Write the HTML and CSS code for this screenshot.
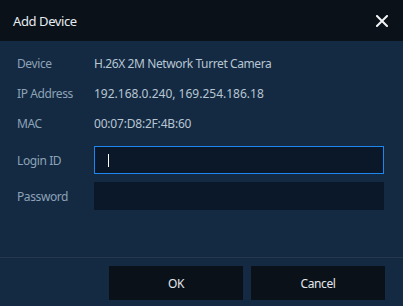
FILE: index.html
```html
<!DOCTYPE html>
<html lang="en">
<head>
    <meta charset="UTF-8">
    <title>Add Device</title>
    <link rel="stylesheet" href="styles.css">
</head>
<body>
<div class="dialog">
    <div class="header">
        <span class="title">Add Device</span>
        <svg class="close" width="12" height="12" viewBox="0 0 12 12">
            <path d="M1 1L11 11M11 1L1 11" stroke="#f2f4f6" stroke-width="2" stroke-linecap="square"/>
        </svg>
    </div>
    <div class="content">
        <div class="info">
            <div class="label">Device</div>
            <div class="value">H.26X 2M Network Turret Camera</div>
            <div class="label">IP Address</div>
            <div class="value num">192.168.0.240, 169.254.186.18</div>
            <div class="label">MAC</div>
            <div class="value mac">00:07:D8:2F:4B:60</div>
        </div>
        <div class="form">
            <div class="label">Login ID</div>
            <div class="field focus"><span class="caret"></span></div>
            <div class="label">Password</div>
            <div class="field"></div>
        </div>
    </div>
    <div class="footer">
        <button class="btn">OK</button>
        <button class="btn">Cancel</button>
    </div>
</div>
</body>
</html>
```
FILE: styles.css
```css
*{
    margin:0;
    padding:0;
    box-sizing: border-box;
}
body{
    width: 403px;
    height: 306px;
    overflow: hidden;
    font-family: "Noto Sans", "Liberation Sans", sans-serif;
    font-size: 12px;
    letter-spacing: -0.4px;
}
.dialog{
    width: 403px;
    height: 306px;
    background: #132a42;
    display: flex;
    flex-direction: column;
}
.header{
    height: 41px;
    background: #0a1119;
    display: flex;
    align-items: center;
    justify-content: space-between;
    padding: 0 15px 0 13px;
}
.title{
    color: #e6ebf0;
    font-size: 13px;
}
.close{
    display: block;
}
.content{
    flex: 1;
    padding: 7px 19px 0 17px;
}
.info{
    display: grid;
    grid-template-columns: 77px 1fr;
    grid-auto-rows: 30px;
    align-items: center;
}
.form{
    display: grid;
    grid-template-columns: 77px 1fr;
    grid-auto-rows: 28px;
    row-gap: 8px;
    align-items: center;
    margin-top: 8px;
}
.label{
    color: #8ea2b7;
}
.value{
    color: #b8c5d2;
}
.value.num{
    letter-spacing: 0;
}
.value.mac{
    letter-spacing: -0.2px;
}
.field{
    height: 28px;
    background: #0a1829;
    display: flex;
    align-items: center;
    padding-left: 14px;
}
.field.focus{
    border: 1px solid #1c86ee;
    padding-left: 13px;
}
.caret{
    width: 1px;
    height: 13px;
    background: #ffffff;
}
.footer{
    height: 49px;
    border-top: 1px solid #27394d;
    display: flex;
    justify-content: flex-end;
    gap: 8px;
    padding: 8px 18px 0 0;
}
.btn{
    width: 134px;
    height: 34px;
    border: none;
    background: #0a1119;
    color: #e3e8ed;
    font-family: inherit;
    font-size: 12px;
    letter-spacing: inherit;
}
```
